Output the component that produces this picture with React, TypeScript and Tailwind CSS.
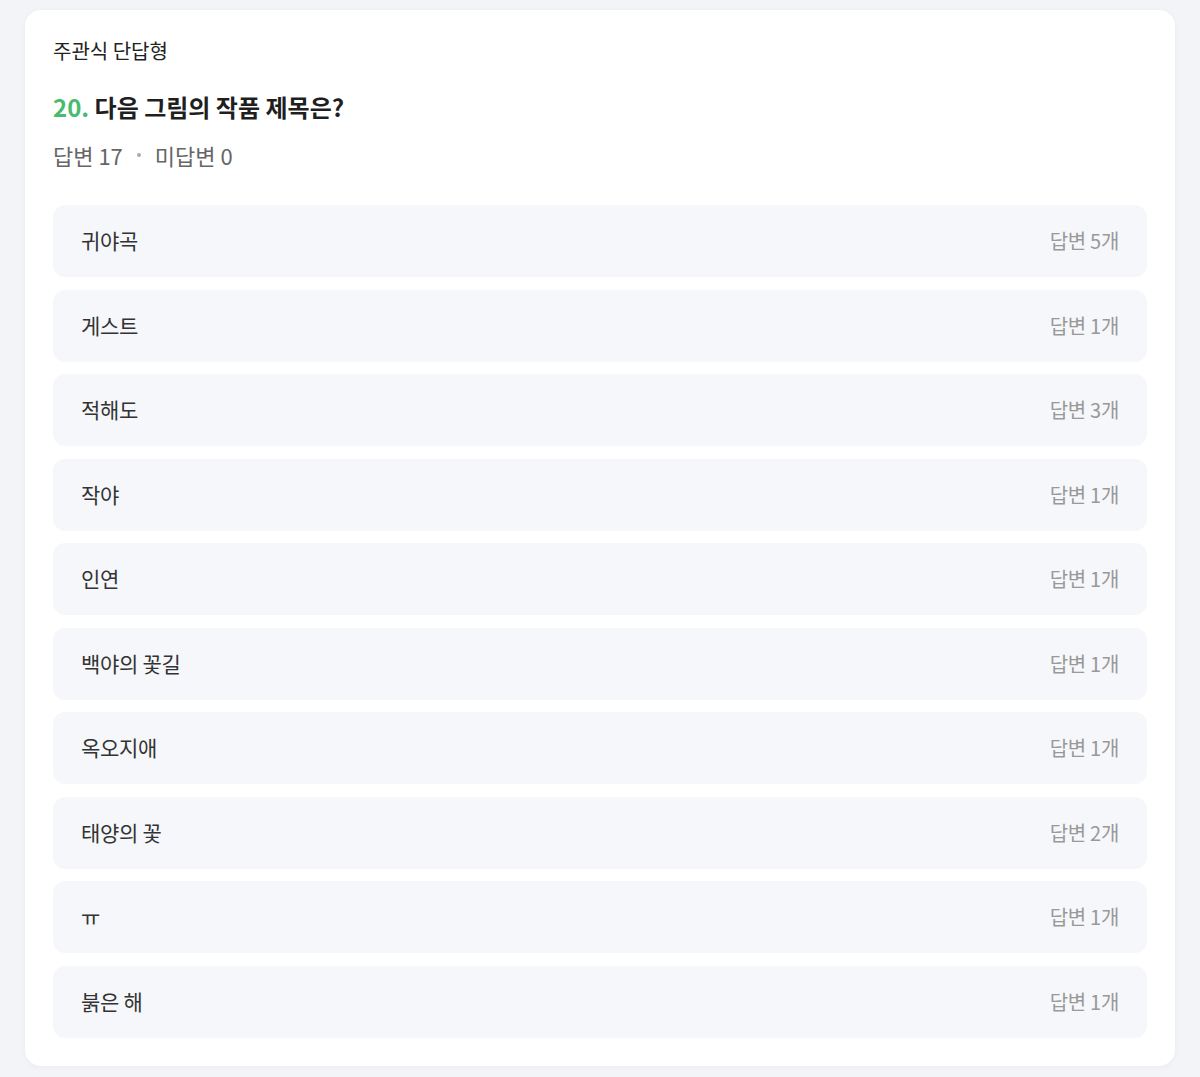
import React from 'react';

const answers = [
  { text: '귀야곡', count: 5 },
  { text: '게스트', count: 1 },
  { text: '적해도', count: 3 },
  { text: '작야', count: 1 },
  { text: '인연', count: 1 },
  { text: '백야의 꽃길', count: 1 },
  { text: '옥오지애', count: 1 },
  { text: '태양의 꽃', count: 2 },
  { text: 'ㅠ', count: 1 },
  { text: '붉은 해', count: 1 },
];

export default function App() {
  return (
    <div
      className="min-h-[1077px] bg-[#f3f4f7] px-[25px] pt-[10px] pb-3"
      style={{ fontFamily: '"Noto Sans CJK KR", "Noto Sans", sans-serif' }}
    >
      <div className="bg-white rounded-2xl shadow-[0_1px_6px_rgba(0,0,0,0.04)] px-[28px] pt-[26px] pb-[28px]">
        <p className="text-[20px] leading-[30px] text-[#222]">주관식 단답형</p>
        <h2 className="mt-[24px] text-[24px] leading-[34px] font-bold text-[#1f1f1f]">
          <span className="text-[#48bb6e]">20.</span> 다음 그림의 작품 제목은?
        </h2>
        <div className="mt-[16px] flex items-center text-[22px] leading-[30px] text-[#666]">
          <span>답변 17</span>
          <span className="mx-[14px] w-[4px] h-[4px] rounded-full bg-[#aaa]" />
          <span>미답변 0</span>
        </div>
        <div className="mt-[35px] flex flex-col gap-[12.5px]">
          {answers.map((a, i) => (
            <div
              key={i}
              className="h-[72px] rounded-xl bg-[#f6f7fa] px-[28px] flex items-center justify-between"
            >
              <span className="text-[21px] text-[#333] tracking-[-0.3px]">{a.text}</span>
              <span className="text-[20px] text-[#999] tracking-[-0.3px]">답변 {a.count}개</span>
            </div>
          ))}
        </div>
      </div>
    </div>
  );
}
